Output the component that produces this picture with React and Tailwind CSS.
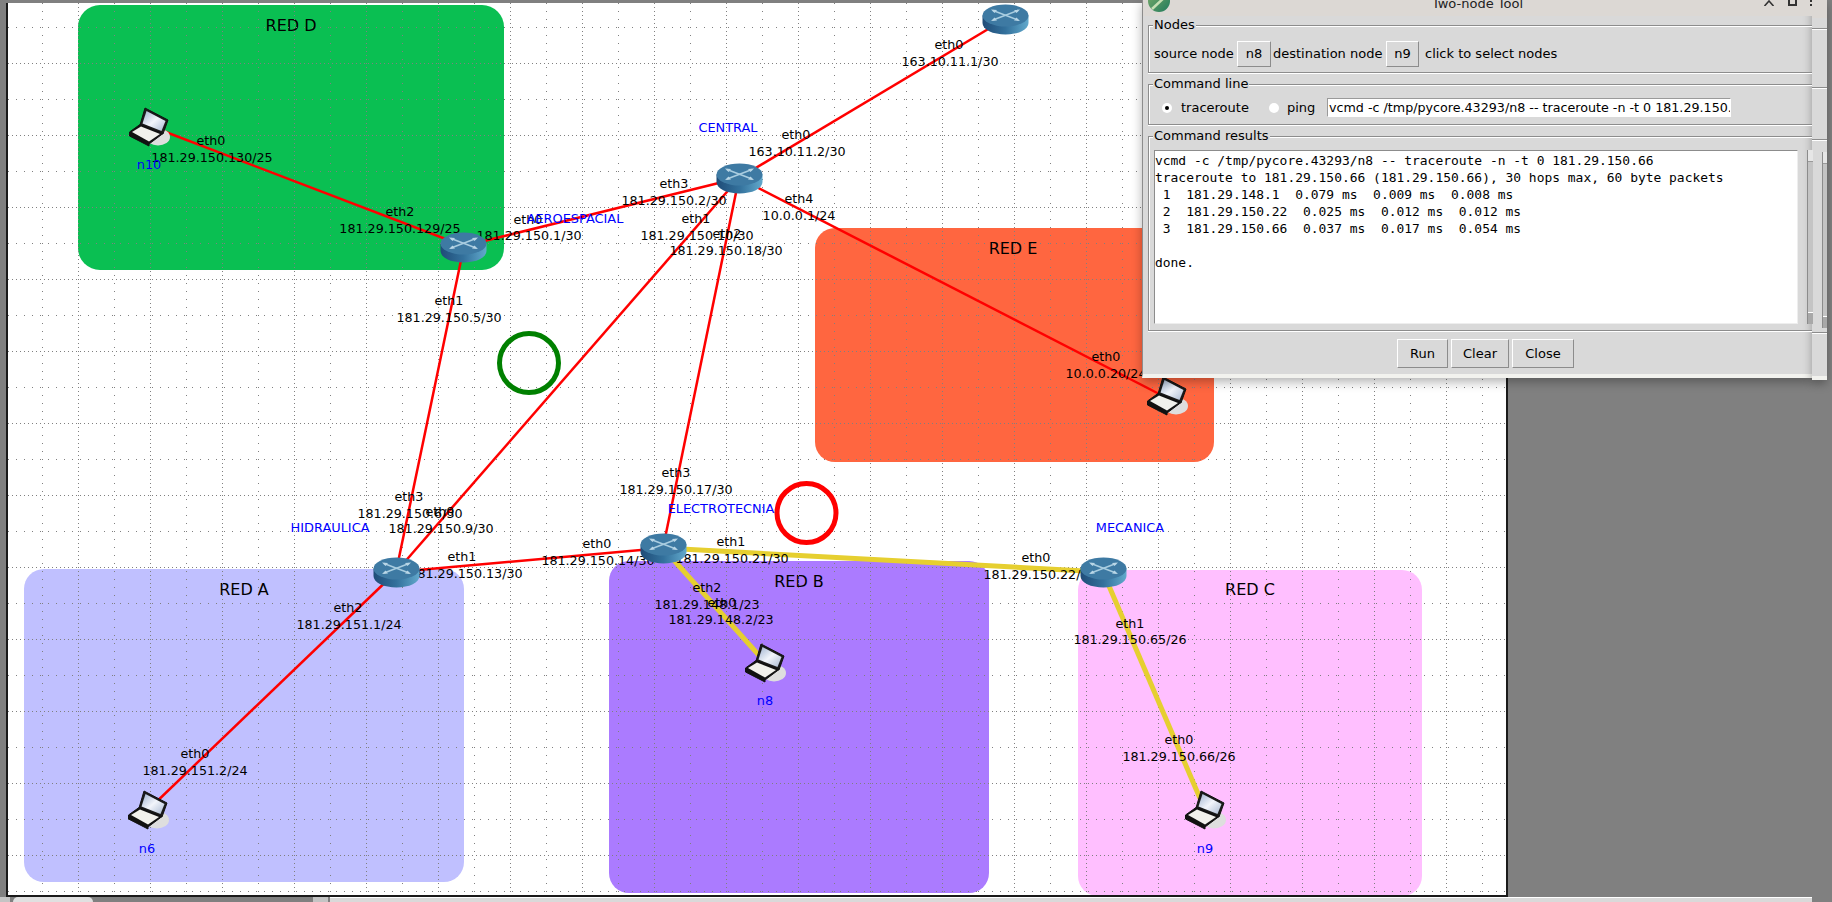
import React from 'react'

const OX = 8
const OY = 3

const groups = [
  { name: 'RED D', box: 'left-[70px] top-[2px] w-[426px] h-[265px] bg-[#0abf52] rounded-[22px]', x: 291, y: 26 },
  { name: 'RED E', box: 'left-[807px] top-[225px] w-[399px] h-[234px] bg-[#ff6640] rounded-[20px]', x: 1013, y: 249 },
  { name: 'RED A', box: 'left-[16px] top-[566px] w-[440px] h-[313px] bg-[#c0c0ff] rounded-[20px]', x: 244, y: 590 },
  { name: 'RED B', box: 'left-[601px] top-[558px] w-[380px] h-[332px] bg-[#ab7bff] rounded-[20px]', x: 799, y: 582 },
  { name: 'RED C', box: 'left-[1070px] top-[567px] w-[344px] h-[326px] bg-[#ffbfff] rounded-[20px]', x: 1250, y: 590 },
]

const routers = [
  { x: 440, y: 232 },
  { x: 716, y: 163 },
  { x: 982, y: 4 },
  { x: 373, y: 557 },
  { x: 640, y: 533 },
  { x: 1080, y: 557 },
]

const laptops = [
  { x: 129, y: 107 },
  { x: 128, y: 790 },
  { x: 745, y: 643 },
  { x: 1185, y: 790 },
  { x: 1147, y: 376 },
]

// wires run centre to centre, the icons sit on top of them
const redWires = [
  [150, 126, 464, 246],
  [464, 246, 739, 178],
  [464, 246, 396, 572],
  [739, 178, 396, 572],
  [739, 178, 663, 548],
  [739, 178, 1005, 19],
  [739, 178, 1167, 398],
  [396, 572, 663, 548],
  [396, 572, 150, 808],
]

const yellowWires = [
  [663, 548, 1103, 572],
  [663, 548, 765, 662],
  [1103, 572, 1205, 810],
]

const labels = [
  ['eth0', 211, 141], ['181.29.150.130/25', 212, 158],
  ['eth2', 400, 212], ['181.29.150.129/25', 400, 229],
  ['eth0', 528, 220], ['181.29.150.1/30', 529, 236],
  ['eth1', 449, 301], ['181.29.150.5/30', 449, 318],
  ['eth0', 796, 135], ['163.10.11.2/30', 797, 152],
  ['eth3', 674, 184], ['181.29.150.2/30', 674, 201],
  ['eth4', 799, 199], ['10.0.0.1/24', 799, 216],
  ['eth1', 696, 219], ['181.29.150.10/30', 697, 236],
  ['eth2', 727, 234], ['181.29.150.18/30', 726, 251],
  ['eth0', 949, 45], ['163.10.11.1/30', 950, 62],
  ['eth0', 1106, 357], ['10.0.0.20/24', 1106, 374],
  ['eth3', 409, 497], ['181.29.150.6/30', 410, 514],
  ['eth0', 440, 512], ['181.29.150.9/30', 441, 529],
  ['eth1', 462, 557], ['181.29.150.13/30', 466, 574],
  ['eth0', 597, 544], ['181.29.150.14/30', 598, 561],
  ['eth3', 676, 473], ['181.29.150.17/30', 676, 490],
  ['eth1', 731, 542], ['181.29.150.21/30', 732, 559],
  ['eth2', 707, 588], ['181.29.148.1/23', 707, 605],
  ['eth0', 722, 603], ['181.29.148.2/23', 721, 620],
  ['eth0', 1036, 558], ['181.29.150.22/30', 1040, 575],
  ['eth1', 1130, 624], ['181.29.150.65/26', 1130, 640],
  ['eth0', 1179, 740], ['181.29.150.66/26', 1179, 757],
  ['eth2', 348, 608], ['181.29.151.1/24', 349, 625],
  ['eth0', 195, 754], ['181.29.151.2/24', 195, 771],
]

const names = [
  ['n10', 149, 165], ['AEROESPACIAL', 575, 219], ['CENTRAL', 728, 128],
  ['HIDRAULICA', 330, 528], ['ELECTROTECNIA', 721, 509], ['MECANICA', 1130, 528],
  ['n6', 147, 849], ['n8', 765, 701], ['n9', 1205, 849],
]

const results = [
  'vcmd -c /tmp/pycore.43293/n8 -- traceroute -n -t 0 181.29.150.66',
  'traceroute to 181.29.150.66 (181.29.150.66), 30 hops max, 60 byte packets',
  ' 1  181.29.148.1  0.079 ms  0.009 ms  0.008 ms',
  ' 2  181.29.150.22  0.025 ms  0.012 ms  0.012 ms',
  ' 3  181.29.150.66  0.037 ms  0.017 ms  0.054 ms',
  '',
  'done.',
]

const Grid = () => {
  const xs = []
  for (let x = 6; x < 1506; x += 36) xs.push(x)
  const ys = []
  for (let y = 27; y < 895; y += 36) ys.push(y)
  return (
    <g stroke="#808080" strokeWidth="1" shapeRendering="crispEdges">
      {xs.map((x, i) => (
        <line key={x} x1={x + 0.5} y1="3" x2={x + 0.5} y2="895" strokeDasharray={i % 2 === 0 ? '1 3' : '1 7'} />
      ))}
      {ys.map((y, i) => (
        <line key={y} x1="8" y1={y + 0.5} x2="1506" y2={y + 0.5} strokeDasharray={i % 2 === 1 ? '1 3' : '1 7'} />
      ))}
    </g>
  )
}

const Router = ({ x, y }) => (
  <svg
    className="absolute w-[47px] h-[31px]"
    style={{ left: x - OX, top: y - OY }}
    viewBox="0 0 47 31"
  >
    <defs>
      <linearGradient id="routerBody" x1="0" x2="1" y1="0" y2="0">
        <stop offset="0" stopColor="#1f4c78" />
        <stop offset="0.5" stopColor="#33719c" />
        <stop offset="1" stopColor="#62a9cc" />
      </linearGradient>
    </defs>
    <path d="M0.5 11.5 V19 A23 11.5 0 0 0 46.5 19 V11.5 Z" fill="url(#routerBody)" />
    <ellipse cx="23.5" cy="11.5" rx="23" ry="11" fill="#3e7aa3" />
    <g stroke="#a9cde0" strokeWidth="1.6" fill="none">
      <path d="M11 6.5 L36 16" />
      <path d="M36 6.5 L11 16" />
    </g>
    <path d="M9 5.5 L15 6 L12.5 9 Z M38 5.5 L32 6 L34.5 9 Z M9 17 L15 16.5 L12.5 13.5 Z M38 17 L32 16.5 L34.5 13.5 Z" fill="#b9d6e6" />
  </svg>
)

const Laptop = ({ x, y }) => (
  <svg
    className="absolute w-[42px] h-[40px]"
    style={{ left: x - OX, top: y - OY }}
    viewBox="0 0 42 40"
  >
    <defs>
      <linearGradient id="laptopScreen" x1="0" x2="1" y1="0" y2="1">
        <stop offset="0" stopColor="#9fb2cf" />
        <stop offset="0.5" stopColor="#f2f5fb" />
        <stop offset="1" stopColor="#a9b9d2" />
      </linearGradient>
    </defs>
    <ellipse cx="29" cy="30" rx="12" ry="8.5" fill="#dedede" />
    <path d="M16 1 L39 13 L34 27 L11 18 Z" fill="#1a1a1a" stroke="#111" strokeWidth="1" strokeLinejoin="round" />
    <path d="M17.5 4 L36.5 14 L32.5 24 L13.5 16.5 Z" fill="url(#laptopScreen)" />
    <path d="M0.5 25 L11 17.5 L34 26.5 L20 37 L20 39 L0.5 29 Z" fill="#111" stroke="#111" strokeWidth="1" strokeLinejoin="round" />
    <path d="M3 25 L12 19.5 L31 27 L20 34.5 Z" fill="#f1f1ec" />
  </svg>
)

const Canvas = () => (
  <div className="relative w-[1498px] h-[892px] bg-white overflow-hidden">
    {groups.map((g) => (
      <div key={g.name} className={`absolute ${g.box}`} />
    ))}
    {groups.map((g) => (
      <span
        key={g.name}
        className="absolute -translate-x-1/2 -translate-y-1/2 whitespace-nowrap text-[16px] text-black"
        style={{ left: g.x - OX, top: g.y - OY }}
      >
        {g.name}
      </span>
    ))}
    <svg className="absolute inset-0 w-[1498px] h-[892px]" viewBox="8 3 1498 892">
      <Grid />
      <circle cx="529" cy="363" r="29.5" fill="none" stroke="#008000" strokeWidth="5" />
      <circle cx="806.5" cy="513" r="29.5" fill="none" stroke="#ff0000" strokeWidth="5" />
      {redWires.map((w, i) => (
        <line key={i} x1={w[0]} y1={w[1]} x2={w[2]} y2={w[3]} stroke="#ff0000" strokeWidth="2.5" />
      ))}
      {yellowWires.map((w, i) => (
        <line key={i} x1={w[0]} y1={w[1]} x2={w[2]} y2={w[3]} stroke="#e6cf30" strokeWidth="5" />
      ))}
    </svg>
    {labels.map(([text, x, y], i) => (
      <span
        key={i}
        className="absolute -translate-x-1/2 -translate-y-1/2 whitespace-nowrap text-[12.7px] text-black"
        style={{ left: x - OX, top: y - OY }}
      >
        {text}
      </span>
    ))}
    {names.map(([text, x, y]) => (
      <span
        key={text}
        className="absolute -translate-x-1/2 -translate-y-1/2 whitespace-nowrap text-[12.9px] text-[#0000ff]"
        style={{ left: x - OX, top: y - OY }}
      >
        {text}
      </span>
    ))}
    {routers.map((r) => (
      <Router key={`${r.x}-${r.y}`} {...r} />
    ))}
    {laptops.map((l) => (
      <Laptop key={`${l.x}-${l.y}`} {...l} />
    ))}
  </div>
)

const Frame = ({ title, className, children }) => (
  <div className={`relative ml-[5px] border-y border-l border-[#8c8c8c] shadow-[inset_1px_1px_0_#fff,0_1px_0_#fff] ${className}`}>
    <span className="absolute left-[4px] top-[-9px] bg-[#d9d9d9] px-[1px] leading-[16px]">{title}</span>
    {children}
  </div>
)

const TkButton = ({ className, children }) => (
  <div className={`flex items-center justify-center border border-t-white border-l-white border-r-[#8c8c8c] border-b-[#8c8c8c] ${className}`}>
    {children}
  </div>
)

const Radio = ({ checked }) => (
  <span className="flex items-center justify-center w-[10px] h-[10px] rounded-full bg-white">
    {checked && <span className="w-[4px] h-[4px] rounded-full bg-black" />}
  </span>
)

const Scrollbar = ({ className }) => (
  <div className={`flex flex-col justify-between bg-[#c4c4c4] border-l border-[#8c8c8c] ${className}`}>
    <div className="h-[12px] bg-[#e6e6e6] border-b border-[#9a9a9a]" />
    <div className="h-[12px] bg-[#a8a8a8] border-t border-white" />
  </div>
)

const TwoNodeTool = () => (
  <div className="absolute left-[1142px] top-0 flex items-start text-[13px] text-black">
    <div className="w-[670px] h-[378px] bg-[#d9d9d9] border-l border-[#8c8c8c] border-b-[4px] border-b-[#f2f2ee] shadow-[0_4px_10px_rgba(0,0,0,0.3)]">
      <div className="relative flex h-[16px] justify-center bg-[#dcd8d4] overflow-hidden">
        <svg className="absolute left-[4px] top-[-11px] w-[24px] h-[24px]" viewBox="0 0 24 24">
          <defs>
            <linearGradient id="coreLogo" x1="0" x2="1" y1="0" y2="1">
              <stop offset="0" stopColor="#7fae6a" />
              <stop offset="1" stopColor="#1f7a5c" />
            </linearGradient>
          </defs>
          <circle cx="12" cy="12" r="11" fill="url(#coreLogo)" />
          <path d="M5 20 L20 6" stroke="#c7dfb4" strokeWidth="2.5" />
        </svg>
        <span className="mt-[-4px] leading-[16px] text-[#222]">Two-node Tool</span>
        <svg className="absolute left-[620px] top-0 w-[12px] h-[6px]" viewBox="0 0 12 6">
          <path d="M1.5 6 L6 1 L10.5 6" fill="none" stroke="#333" strokeWidth="1.6" />
        </svg>
        <div className="absolute left-[645px] top-[-2px] w-[9px] h-[8px] border-2 border-[#333]" />
        <div className="absolute left-[667px] top-0 flex flex-col gap-[2px]">
          <span className="w-[2px] h-[2px] bg-[#333]" />
          <span className="w-[2px] h-[2px] bg-[#333]" />
        </div>
      </div>
      <div className="pt-[9px]">
        <Frame title="Nodes" className="h-[48px]">
          <div className="flex items-center pl-[5px] pt-[15px]">
            <span className="w-[83px]">source node</span>
            <TkButton className="w-[34px] h-[26px]">n8</TkButton>
            <span className="w-[113px] ml-[2px]">destination node</span>
            <TkButton className="w-[33px] h-[26px]">n9</TkButton>
            <span className="ml-[6px]">click to select nodes</span>
          </div>
        </Frame>
        <Frame title="Command line" className="h-[41px] mt-[11px]">
          <div className="flex items-center pl-[13px] pt-[13px]">
            <Radio checked />
            <span className="w-[88px] ml-[9px]">traceroute</span>
            <Radio />
            <span className="w-[40px] ml-[8px]">ping</span>
            <div className="w-[404px] h-[19px] bg-white border border-t-[#9a9a9a] border-l-[#9a9a9a] border-r-white border-b-white pl-[1px] overflow-hidden whitespace-nowrap text-[12.7px] leading-[17px]">
              vcmd -c /tmp/pycore.43293/n8 -- traceroute -n -t 0 181.29.150.66
            </div>
          </div>
        </Frame>
        <Frame title="Command results" className="h-[195px] mt-[11px]">
          <div className="flex items-start pl-[5px] pt-[13px]">
            <div className="w-[644px] h-[174px] shrink-0 bg-white border border-t-[#8c8c8c] border-l-[#8c8c8c] border-r-[#eeeeee] border-b-[#eeeeee] pt-[1px] font-['DejaVu_Sans_Mono',monospace] text-[12.95px] leading-[17px] whitespace-pre overflow-hidden">
              {results.map((line, i) => (
                <div key={i} className="h-[17px]">{line}</div>
              ))}
            </div>
            <Scrollbar className="w-[6px] h-[174px] ml-[9px] shrink-0" />
          </div>
        </Frame>
        <div className="flex gap-[3px] pl-[254px] pt-[8px]">
          <TkButton className="w-[51px] h-[29px]">Run</TkButton>
          <TkButton className="w-[58px] h-[29px]">Clear</TkButton>
          <TkButton className="w-[62px] h-[29px]">Close</TkButton>
        </div>
      </div>
    </div>
    <div className="w-[15px] h-[380px] bg-[#d9d9d9] border-b-[4px] border-b-[#f2f2ee] shadow-[0_4px_10px_rgba(0,0,0,0.3)]">
      <div className="h-[18px] bg-[#dcd8d4]" />
      <div className="h-[10px]" />
      <div className="h-[59px] border-t border-[#8c8c8c] shadow-[inset_0_1px_0_#fff]" />
      <div className="h-[52px] border-t border-[#8c8c8c] shadow-[inset_0_1px_0_#fff]" />
      <div className="h-[193px] border-t border-[#8c8c8c] shadow-[inset_0_1px_0_#fff] pt-[12px] pl-[10px]">
        <Scrollbar className="w-[5px] h-[176px]" />
      </div>
      <div className="border-t border-[#8c8c8c] shadow-[inset_0_1px_0_#fff] h-[2px]" />
    </div>
  </div>
)

const BottomBar = () => (
  <div className="flex h-[7px] bg-[#808080] overflow-hidden">
    <div className="w-[10px] bg-[#c4c4c4]" />
    <div className="flex w-[80px] ml-[3px] justify-around rounded-t-[5px] bg-[#e0e0e0] pt-[5px]">
      <span className="w-[6px] h-[2px] bg-black" />
      <span className="w-[6px] h-[2px] bg-black" />
    </div>
    <div className="w-[15px] ml-[220px] bg-[#c4c4c4]" />
    <div className="w-[1482px] ml-[2px] bg-[#d9d9d9] border-t border-white" />
  </div>
)

const App = () => (
  <div className="relative w-[1832px] h-[902px] overflow-hidden bg-[#808080] font-['DejaVu_Sans',sans-serif]">
    <div className="h-[3px]" />
    <div className="flex w-[1502px] ml-[6px] border-x-2 border-b-2 border-[#1a1a1a]">
      <Canvas />
    </div>
    <BottomBar />
    <TwoNodeTool />
  </div>
)

export default App
